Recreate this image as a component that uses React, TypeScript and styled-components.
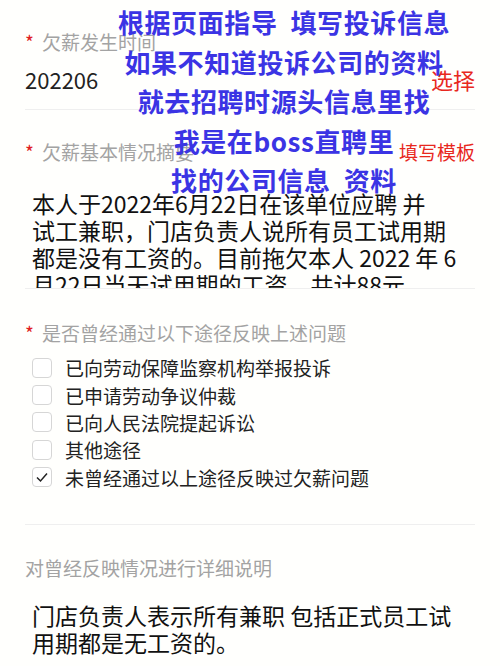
import React, { useState } from 'react';
import styled, { createGlobalStyle } from 'styled-components';

const GlobalStyle = createGlobalStyle`
    html, body {
        margin: 0;
        padding: 0;
        background: #fffffd;
    }
    body {
        font-family: "Noto Sans CJK SC", "Noto Sans", sans-serif;
    }
`;

const Page = styled.div`
    position: relative;
    width: 500px;
    height: 666px;
    overflow: hidden;
    background: #fffffd;
`;

const Form = styled.div`
    display: flex;
    flex-direction: column;
    padding: 0 25px;
`;

const Field = styled.div<{ $top: number; $bottom: number; $divider?: boolean }>`
    display: flex;
    flex-direction: column;
    padding-top: ${(p) => p.$top}px;
    padding-bottom: ${(p) => p.$bottom}px;
    border-bottom: ${(p) => (p.$divider ? '1px solid #efefef' : 'none')};
`;

const LabelRow = styled.div`
    display: flex;
    align-items: center;
    justify-content: space-between;
    height: 24px;
`;

const Label = styled.div`
    font-size: 19px;
    line-height: 24px;
    color: #a3a3a3;
    white-space: nowrap;
`;

const Star = styled.span`
    color: #e02020;
    margin-right: 8px;
`;

const Action = styled.span<{ $size: number }>`
    font-size: ${(p) => p.$size}px;
    color: #e8281e;
    line-height: 24px;
`;

const ValueRow = styled.div`
    display: flex;
    align-items: center;
    justify-content: space-between;
    margin-top: 11px;
    height: 28px;
`;

const Value = styled.div`
    font-size: 22px;
    color: #222;
`;

const TextBlock = styled.div<{ $gap: number; $height?: number }>`
    margin-top: ${(p) => p.$gap}px;
    padding-left: 7px;
    font-size: 23px;
    line-height: 27px;
    color: #111;
    white-space: pre;
    ${(p) => (p.$height ? `height: ${p.$height}px; overflow: hidden;` : '')}
`;

const Options = styled.div`
    display: flex;
    flex-direction: column;
    margin-top: 9px;
    padding-left: 7px;
`;

const Option = styled.label`
    display: flex;
    align-items: center;
    gap: 13px;
    height: 27.4px;
    font-size: 19px;
    color: #222;
    cursor: pointer;
`;

const Box = styled.span`
    display: flex;
    align-items: center;
    justify-content: center;
    width: 20px;
    height: 20px;
    box-sizing: border-box;
    border: 1px solid #d6d6d6;
    border-radius: 4px;
    background: #fff;
`;

const Overlay = styled.div`
    position: absolute;
    top: 2px;
    left: 68px;
    right: 0;
    display: flex;
    flex-direction: column;
    align-items: center;
    pointer-events: none;
`;

const Caption = styled.div`
    font-size: 26px;
    font-weight: 700;
    line-height: 39.5px;
    color: #3b34e4;
    white-space: pre;
    letter-spacing: 0.6px;
`;

const options = [
    '已向劳动保障监察机构举报投诉',
    '已申请劳动争议仲裁',
    '已向人民法院提起诉讼',
    '其他途径',
    '未曾经通过以上途径反映过欠薪问题',
];

const captions = [
    '根据页面指导  填写投诉信息',
    '如果不知道投诉公司的资料',
    '就去招聘时源头信息里找',
    '我是在boss直聘里',
    '找的公司信息  资料',
];

function Check() {
    return (
        <svg width="14" height="14" viewBox="0 0 14 14">
            <path d="M2 7.5 L5.5 11 L12 3.5" fill="none" stroke="#222" strokeWidth="1.5" />
        </svg>
    );
}

export default function App() {
    const [checked, setChecked] = useState<number>(4);

    return (
        <Page>
            <GlobalStyle />
            <Form>
                <Field $top={30} $bottom={16} $divider>
                    <LabelRow>
                        <Label><Star>*</Star>欠薪发生时间</Label>
                    </LabelRow>
                    <ValueRow>
                        <Value>202206</Value>
                        <Action $size={22}>选择</Action>
                    </ValueRow>
                </Field>
                <Field $top={30} $bottom={0} $divider>
                    <LabelRow>
                        <Label><Star>*</Star>欠薪基本情况摘要</Label>
                        <Action $size={19}>填写模板</Action>
                    </LabelRow>
                    <TextBlock $gap={26} $height={98}>
                        {'本人于2022年6月22日在该单位应聘 并\n试工兼职，门店负责人说所有员工试用期\n都是没有工资的。目前拖欠本人 2022 年 6\n月22日当天试用期的工资，共计88元'}
                    </TextBlock>
                </Field>
                <Field $top={32} $bottom={33} $divider>
                    <LabelRow>
                        <Label><Star>*</Star>是否曾经通过以下途径反映上述问题</Label>
                    </LabelRow>
                    <Options>
                        {options.map((text, i) => (
                            <Option key={text} onClick={() => setChecked(i)}>
                                <Box>{checked === i && <Check />}</Box>
                                {text}
                            </Option>
                        ))}
                    </Options>
                </Field>
                <Field $top={31} $bottom={0}>
                    <LabelRow>
                        <Label>对曾经反映情况进行详细说明</Label>
                    </LabelRow>
                    <TextBlock $gap={22}>
                        {'门店负责人表示所有兼职 包括正式员工试\n用期都是无工资的。'}
                    </TextBlock>
                </Field>
            </Form>
            <Overlay>
                {captions.map((c) => (
                    <Caption key={c}>{c}</Caption>
                ))}
            </Overlay>
        </Page>
    );
}
